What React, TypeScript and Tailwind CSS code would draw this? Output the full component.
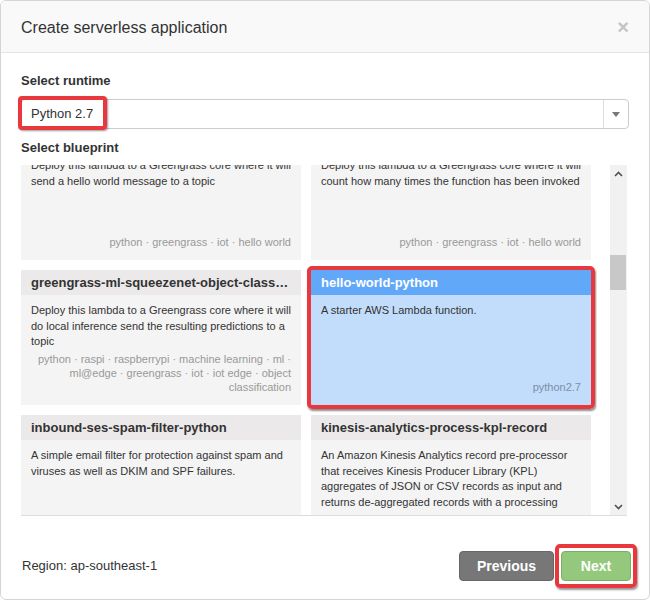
type Blueprint = {
  name: string;
  description: string;
  tags: string[];
  selected?: boolean;
};

const blueprints: Blueprint[] = [
  {
    name: "greengrass-hello-world",
    description: "Deploy this lambda to a Greengrass core where it will send a hello world message to a topic",
    tags: ["python", "greengrass", "iot", "hello world"],
  },
  {
    name: "greengrass-hello-world-counter",
    description: "Deploy this lambda to a Greengrass core where it will count how many times the function has been invoked",
    tags: ["python", "greengrass", "iot", "hello world"],
  },
  {
    name: "greengrass-ml-squeezenet-object-classification",
    description:
      "Deploy this lambda to a Greengrass core where it will do local inference send the resulting predictions to a topic",
    tags: ["python", "raspi", "raspberrypi", "machine learning", "ml", "ml@edge", "greengrass", "iot", "iot edge", "object classification"],
  },
  {
    name: "hello-world-python",
    description: "A starter AWS Lambda function.",
    tags: ["python2.7"],
    selected: true,
  },
  {
    name: "inbound-ses-spam-filter-python",
    description: "A simple email filter for protection against spam and viruses as well as DKIM and SPF failures.",
    tags: ["python", "ses", "email"],
  },
  {
    name: "kinesis-analytics-process-kpl-record",
    description:
      "An Amazon Kinesis Analytics record pre-processor that receives Kinesis Producer Library (KPL) aggregates of JSON or CSV records as input and returns de-aggregated records with a processing",
    tags: ["python", "kinesis", "analytics"],
  },
];

function BlueprintCard({ bp }: { bp: Blueprint }) {
  return (
    <div className="relative">
      <div className={`flex h-[135px] flex-col ${bp.selected ? "bg-[#c2ddfc]" : "bg-[#f4f4f4]"}`}>
        <div
          className={`flex h-[25px] shrink-0 items-center px-[10px] ${
            bp.selected ? "bg-[#62a8f9] text-white" : "bg-[#ebe9e9] text-[#333]"
          }`}
        >
          <span className="truncate text-[13px] font-bold">{bp.name}</span>
        </div>
        <div className="flex flex-1 flex-col justify-between overflow-hidden px-[10px] pt-[8px] pb-[11px]">
          <p className="text-[11px] leading-[15.5px] text-[#333]">{bp.description}</p>
          <p className={`text-right text-[11px] leading-[14px] ${bp.selected ? "text-[#7d8ea5]" : "text-[#999]"}`}>
            {bp.tags.join(" · ")}
          </p>
        </div>
      </div>
      {bp.selected ? (
        <div className="pointer-events-none absolute -inset-[4px] rounded-[5px] border-4 border-[#e8383d] shadow-[1px_2px_2px_rgba(0,0,0,0.45)]" />
      ) : null}
    </div>
  );
}

export default function App() {
  return (
    <div className="h-[600px] w-[650px] overflow-hidden rounded-[6px] border border-[#d5d5d5] bg-white font-['Liberation_Sans',Arial,sans-serif] text-[#333]">
      <div className="flex h-[52px] items-center justify-between border-b border-[#e5e5e5] bg-[#f9f9f9] pr-[20px] pl-[20px]">
        <h3 className="pt-[2px] text-[16px] leading-none">Create serverless application</h3>
        <span className="text-[20px] leading-none font-bold text-[#c4c4c4]">×</span>
      </div>

      <div className="px-[20px] pt-[20px]">
        <div className="h-[16px] text-[13px] leading-[16px] font-bold">Select runtime</div>
        <div className="relative mt-[10px] flex h-[30px] items-stretch rounded-[4px] border border-[#ccc]">
          <div className="flex flex-1 items-center pl-[9px] text-[13px]">Python 2.7</div>
          <div className="flex w-[25px] items-center justify-center border-l border-[#ddd]">
            <svg width="8" height="5" viewBox="0 0 8 5">
              <path d="M0 0 L8 0 L4 5 Z" fill="#777" />
            </svg>
          </div>
          <div className="pointer-events-none absolute -top-[4px] -left-[4px] h-[34px] w-[89px] rounded-[4px] border-4 border-[#e8383d] shadow-[1px_1px_2px_rgba(0,0,0,0.4)]" />
        </div>

        <div className="mt-[11px] h-[16px] text-[13px] leading-[16px] font-bold">Select blueprint</div>

        <div className="mt-[9px] flex h-[351px] w-[606px] border-b border-[#ddd]">
          <div className="w-[576px] overflow-hidden">
            <div className="-mt-[40px] grid w-[570px] grid-cols-2 gap-[10px]">
              {blueprints.map((bp) => (
                <BlueprintCard key={bp.name} bp={bp} />
              ))}
            </div>
          </div>
          <div className="ml-[13px] flex w-[17px] flex-col bg-[#f1f1f1]">
            <div className="flex h-[17px] items-center justify-center">
              <svg width="9" height="6" viewBox="0 0 9 6">
                <path d="M1 5 L4.5 1.5 L8 5" fill="none" stroke="#505050" strokeWidth="1.6" />
              </svg>
            </div>
            <div className="mt-[73px] h-[35px] w-[16px] bg-[#c8c8c8]" />
            <div className="flex-1" />
            <div className="flex h-[17px] items-center justify-center">
              <svg width="9" height="6" viewBox="0 0 9 6">
                <path d="M1 1 L4.5 4.5 L8 1" fill="none" stroke="#505050" strokeWidth="1.6" />
              </svg>
            </div>
          </div>
        </div>
      </div>

      <div className="flex items-center justify-between pt-[35px] pr-[18px] pl-[21px]">
        <span className="text-[13px]">Region: ap-southeast-1</span>
        <div className="flex gap-[7px]">
          <button className="h-[30px] w-[95px] rounded-[4px] border border-[#666] bg-[#777] text-[14px] font-bold text-white">
            Previous
          </button>
          <div className="relative">
            <button className="h-[30px] w-[70px] rounded-[4px] border border-[#7bb061] bg-[#94c87c] text-[14px] font-bold text-white">
              Next
            </button>
            <div className="pointer-events-none absolute -top-[7px] -right-[6px] -bottom-[7px] -left-[6px] rounded-[5px] border-4 border-[#e8383d] shadow-[1px_2px_2px_rgba(0,0,0,0.4)]" />
          </div>
        </div>
      </div>
    </div>
  );
}
